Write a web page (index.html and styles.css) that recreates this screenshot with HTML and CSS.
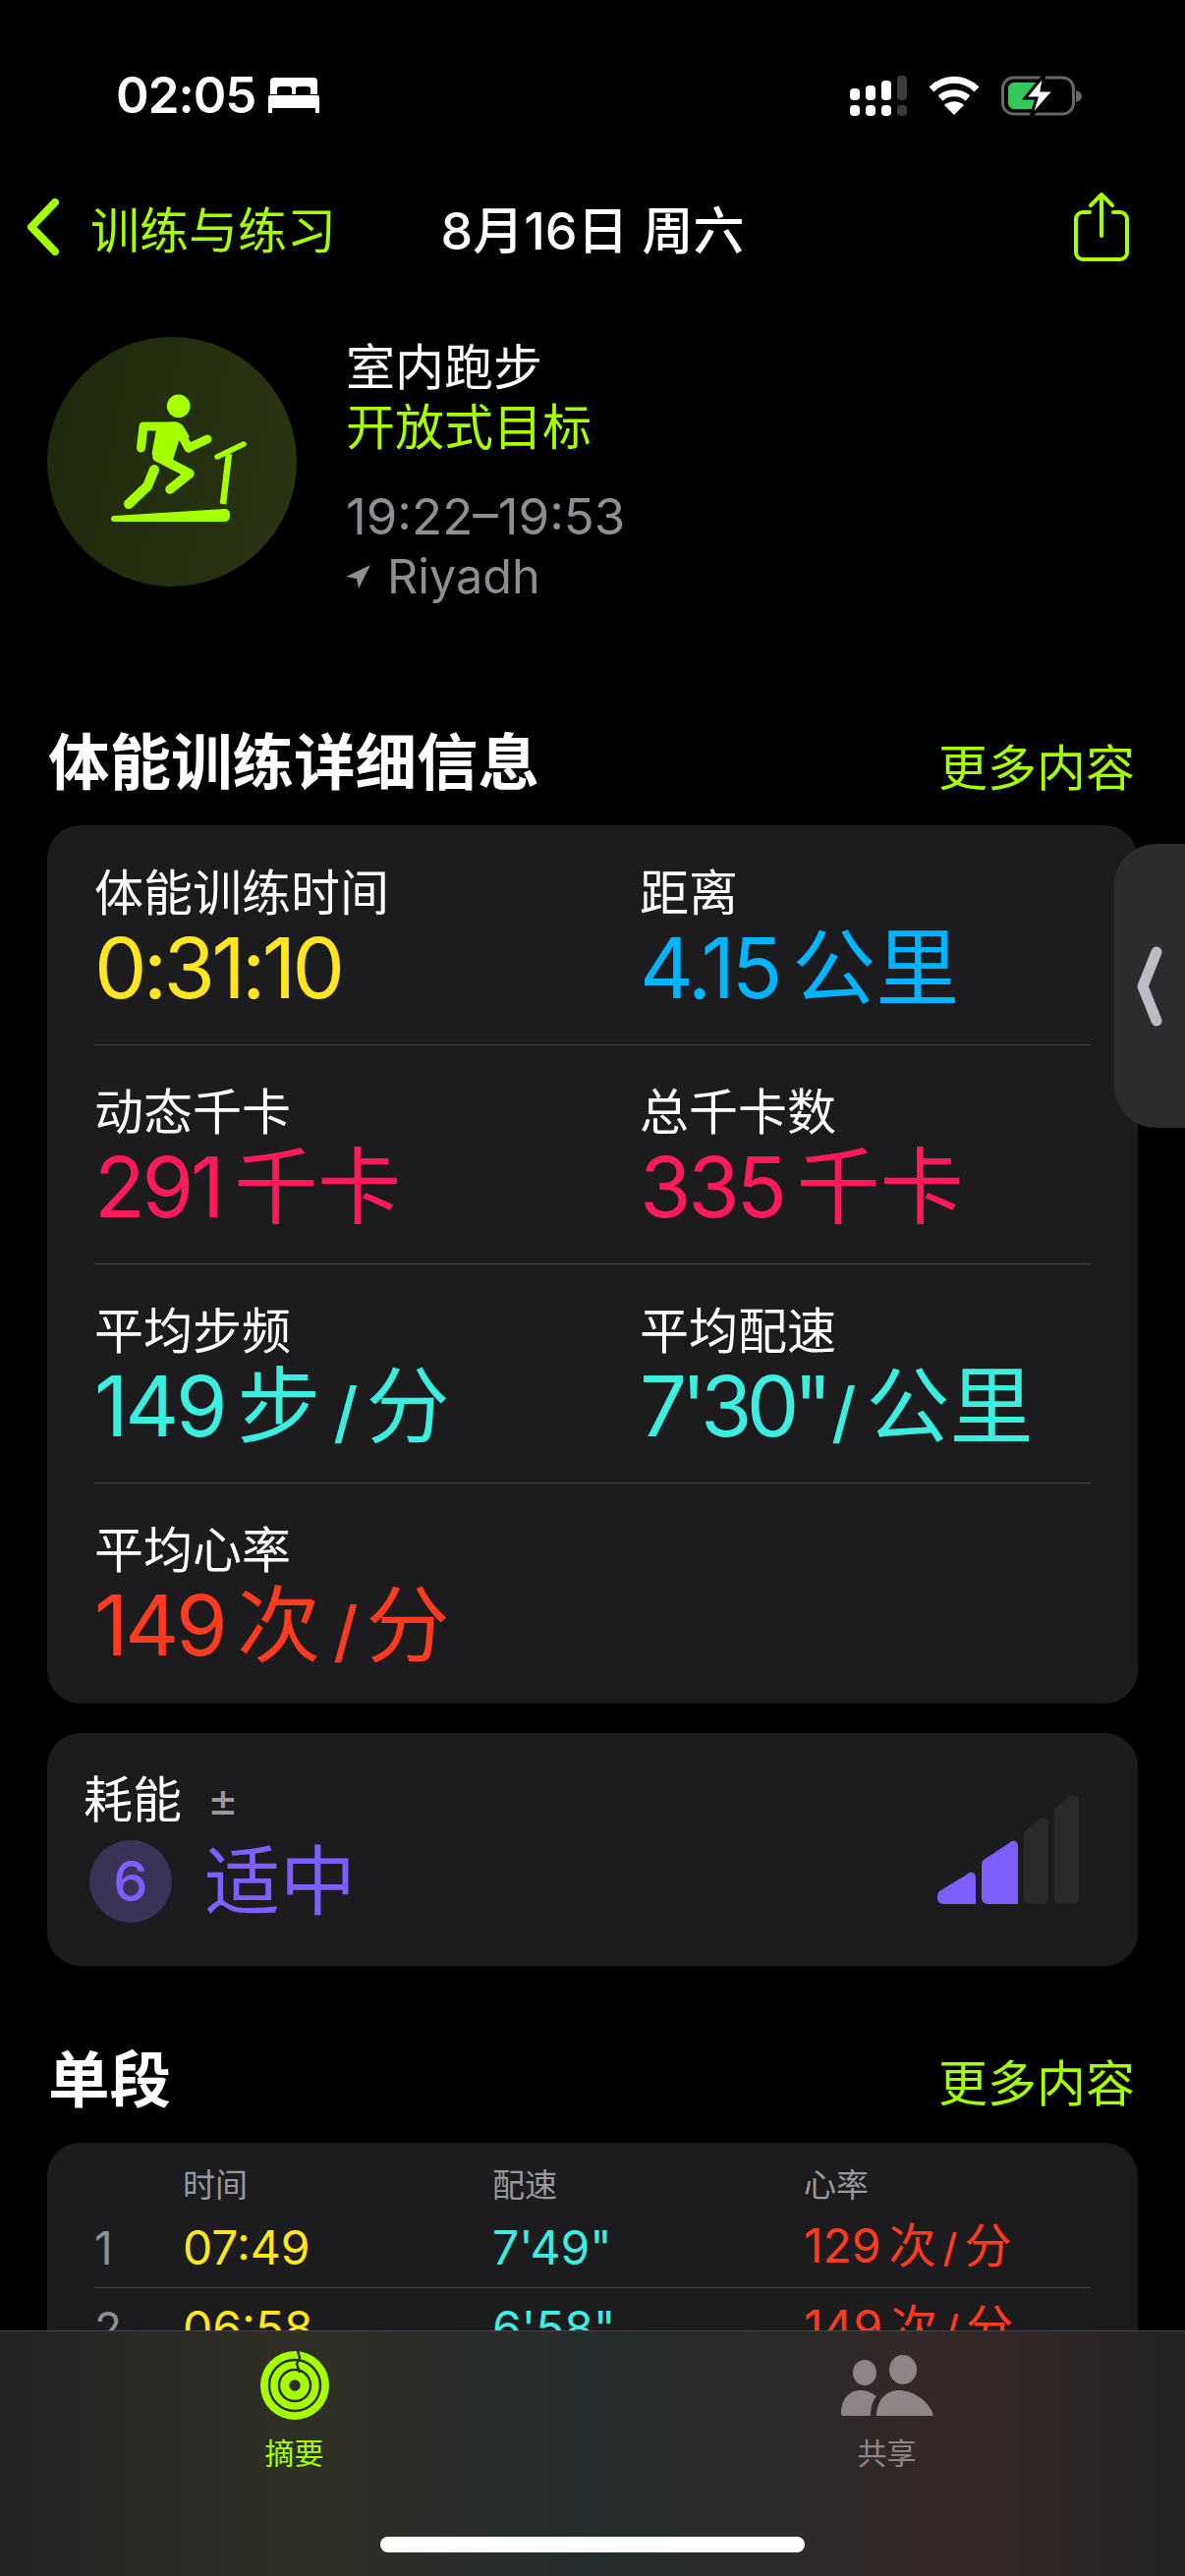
FILE: index.html
```html
<!DOCTYPE html>
<html lang="zh-CN">
<head>
<meta charset="utf-8">
<title>体能训练详细信息</title>
<link rel="stylesheet" href="styles.css">
</head>
<body>
<div class="screen">
  <div class="status">
    <div class="status-left">
      <span class="clock">02:05</span>
      <svg class="bed" width="52" height="38" viewBox="0 0 52 38"><path fill="#fff" d="M6 1h40a4 4 0 0 1 4 4v13h-7v-5a3 3 0 0 0-3-3h-9a3 3 0 0 0-3 3v5h-4v-5a3 3 0 0 0-3-3h-9a3 3 0 0 0-3 3v5H2V5a4 4 0 0 1 4-4zM0 21a2 2 0 0 1 2-2h48a2 2 0 0 1 2 2v16h-4v-5H4v5H0z"/></svg>
    </div>
    <div class="status-right">
      <svg width="58" height="41" viewBox="0 0 58 41"><g fill="#fff"><rect x="0" y="13" width="10" height="12" rx="4"/><rect x="16" y="10" width="10" height="15" rx="4"/><rect x="32" y="5" width="10" height="20" rx="4"/><rect x="0" y="30" width="10" height="11" rx="4"/><rect x="16" y="30" width="10" height="11" rx="4"/><rect x="32" y="30" width="10" height="11" rx="4"/></g><g fill="#3a3a3a"><rect x="48" y="0" width="10" height="25" rx="4"/><rect x="48" y="30" width="10" height="11" rx="4"/></g></svg>
      <svg class="wifi" width="52" height="40" viewBox="0 0 52 40"><g fill="none" stroke="#fff" stroke-width="7"><path d="M3 14C16 1 36 1 49 14"/><path d="M12 23c8-7 20-7 28 0"/></g><path fill="#fff" d="M16 30c6-5 14-5 20 0L26 40z"/></svg>
      <svg class="battery" width="84" height="44" viewBox="0 0 84 44"><rect x="1.5" y="4" width="72" height="37" rx="11" fill="none" stroke="#666" stroke-width="3"/><path d="M76 17c4 1 6 3 6 6s-2 5-6 6z" fill="#666"/><path fill="#34c759" d="M13 9h26l-6 12h6l-4 15H13a6 6 0 0 1-6-6V15a6 6 0 0 1 6-6z"/><path fill="#fff" stroke="#000" stroke-width="3" d="M44 1 24 25h12l-6 19 24-27H41z"/></svg>
    </div>
  </div>

  <div class="nav">
    <div class="nav-back">
      <svg width="34" height="58" viewBox="0 0 34 58"><path d="M29 4 5 29l24 25" fill="none" stroke="#a6ff00" stroke-width="8" stroke-linecap="round" stroke-linejoin="round"/></svg>
      <span>训练与练习</span>
    </div>
    <div class="nav-title">8月16日 周六</div>
    <svg class="nav-share" width="58" height="72" viewBox="0 0 58 72"><g fill="none" stroke="#a6ff00" stroke-width="4" stroke-linecap="round" stroke-linejoin="round"><path d="M17 21H10a7 7 0 0 0-7 7v34a7 7 0 0 0 7 7h38a7 7 0 0 0 7-7V28a7 7 0 0 0-7-7h-7"/><path d="M29 45V3M18 14 29 3l11 11"/></g></svg>
  </div>

  <div class="summary">
    <div class="avatar">
      <svg width="254" height="254" viewBox="48 343 254 254"><g fill="none" stroke="#a6ff00" stroke-linecap="round" stroke-linejoin="round"><path d="M143.500 456l2.500-22 26 0" stroke-width="9"/><path d="M181 436l11 20 19-9" stroke-width="9"/><path d="M160 465l33 17-20 16" stroke-width="9.500"/><path d="M157 478l-7 17-19 18" stroke-width="10"/><path d="M221 465l27-13" stroke-width="5.500"/></g><path fill="none" stroke="#a6ff00" stroke-width="6.500" d="M233 462l-6 51"/><path fill="#a6ff00" d="M160 432l16-3q8 0 12 7l5 9-11 4-6 19-20-4q-2-1-1-5z"/><circle cx="181.700" cy="413.300" r="11.800" fill="#a6ff00"/><path fill="#a6ff00" d="M116 525l112-7h1a5 5 0 0 1 5 5v3a5 5 0 0 1-5 5H116a3 3 0 0 1 0-6z"/></svg>
    </div>
    <div class="summary-text">
      <div class="s-title">室内跑步</div>
      <div class="s-goal">开放式目标</div>
      <div class="s-time">19:22–19:53</div>
      <div class="s-loc">
        <svg width="26" height="26" viewBox="0 0 26 26"><path fill="#8e8e93" d="M25 1 0 13l11 2 2 10z"/></svg>
        <span>Riyadh</span>
      </div>
    </div>
  </div>

  <div class="sec-head first">
    <h2>体能训练详细信息</h2>
    <span class="more">更多内容</span>
  </div>

  <div class="card metrics">
    <div class="m-row">
      <div class="metric"><div class="m-label">体能训练时间</div><div class="m-value yellow clockval">0:31:10</div></div>
      <div class="metric"><div class="m-label">距离</div><div class="m-value blue">4.15<span class="u">公里</span></div></div>
    </div>
    <div class="m-row">
      <div class="metric"><div class="m-label">动态千卡</div><div class="m-value pink">291<span class="u">千卡</span></div></div>
      <div class="metric"><div class="m-label">总千卡数</div><div class="m-value pink">335<span class="u">千卡</span></div></div>
    </div>
    <div class="m-row">
      <div class="metric"><div class="m-label">平均步频</div><div class="m-value cyan">149<span class="u">步</span><span class="sl">/</span><span class="u2">分</span></div></div>
      <div class="metric"><div class="m-label">平均配速</div><div class="m-value cyan"><span class="pace">7'30"</span><span class="sl tight">/</span><span class="u2">公里</span></div></div>
    </div>
    <div class="m-row last">
      <div class="metric"><div class="m-label">平均心率</div><div class="m-value red">149<span class="u">次</span><span class="sl">/</span><span class="u2">分</span></div></div>
    </div>
  </div>

  <div class="card effort">
    <div class="effort-main">
      <div class="effort-label"><span>耗能</span><span class="pm">±</span></div>
      <div class="effort-val"><span class="badge">6</span><span class="effort-text">适中</span></div>
    </div>
    <svg class="effort-bars" width="146" height="114" viewBox="0 0 146 114"><path fill="#7f5fff" d="M0 104q0-3 2-5L30 82c4-4 9-2 9 3v27H6a6 6 0 0 1-6-6z"/><path fill="#7f5fff" d="M45 72q0-3 2-5L73 50c4-4 9-2 9 3v59H51a6 6 0 0 1-6-6z"/><path fill="#2a2a2c" d="M88 42q0-3 2-5L103 26c4-3 10-2 10 3v77a6 6 0 0 1-6 6H94a6 6 0 0 1-6-6z"/><path fill="#2a2a2c" d="M119 19q0-3 2-5L134 3c4-3 10-2 10 3v100a6 6 0 0 1-6 6h-13a6 6 0 0 1-6-6z"/></svg>
  </div>

  <div class="sec-head second">
    <h2>单段</h2>
    <span class="more">更多内容</span>
  </div>

  <div class="card splits">
    <div class="sp-grid sp-head"><span></span><span>时间</span><span>配速</span><span>心率</span></div>
    <div class="sp-grid sp-row sep"><span class="n">1</span><span class="yellow">07:49</span><span class="cyan">7'49"</span><span class="red">129<span class="su">次</span><span class="ssl">/</span><span class="su2">分</span></span></div>
    <div class="sp-grid sp-row"><span class="n">2</span><span class="yellow">06:58</span><span class="cyan">6'58"</span><span class="red">149<span class="su">次</span><span class="ssl">/</span><span class="su2">分</span></span></div>
  </div>

  <div class="handle">
    <svg width="26" height="82" viewBox="0 0 26 82"><path d="M20 6 6 41l14 35" fill="none" stroke="#bcbcc4" stroke-width="11" stroke-linecap="round" stroke-linejoin="round"/></svg>
  </div>

  <div class="tabbar">
    <div class="tabs">
      <div class="tab active">
        <svg width="70" height="70" viewBox="0 0 70 70"><circle cx="35" cy="35" r="35" fill="#a6ff00"/><g fill="none" stroke="#2b2c22" stroke-width="2.500"><circle cx="35" cy="35" r="26"/><circle cx="35" cy="35" r="16"/><path d="M38 0l2 7-3 6 3 9"/></g><circle cx="35" cy="35" r="5.700" fill="#2b2c22"/></svg>
        <span>摘要</span>
      </div>
      <div class="tab">
        <svg width="94" height="62" viewBox="0 0 94 62"><g fill="#8e8686"><ellipse cx="24" cy="18" rx="12" ry="13"/><ellipse cx="63" cy="15" rx="14" ry="15"/><path d="M0 60c0-14 7-24 20-24 7 0 12 3 16 6-4 5-6 11-6 20H1z"/><path d="M36 62c0-16 10-26 23-26s31 10 35 26z"/></g></svg>
        <span>共享</span>
      </div>
    </div>
    <div class="home"></div>
  </div>
</div>
</body>
</html>
```
FILE: styles.css
```css
* { box-sizing: border-box; margin: 0; padding: 0; }
html, body { background: #000; }
body { font-family: Inter, "Noto Sans CJK SC", sans-serif; color: #fff; }
.screen { position: relative; width: 1206px; height: 2622px; overflow: hidden; background: #000; }

.status { display: flex; justify-content: space-between; align-items: center; height: 60px; margin-top: 67px; padding: 0 103px 0 118px; }
.status-left { display: flex; align-items: center; gap: 13px; }
.clock { font-size: 51px; font-weight: 600; letter-spacing: -1px; line-height: 60px; }
.status-right { display: flex; align-items: center; }
.wifi { margin-left: 22px; }
.battery { margin-left: 22px; }

.nav { position: relative; display: flex; justify-content: space-between; align-items: center; height: 80px; margin-top: 64px; padding: 0 56px 0 27px; }
.nav-back { display: flex; align-items: center; gap: 31px; font-size: 50px; color: #a6ff00; }
.nav-title { position: absolute; left: 0; right: 0; text-align: center; font-size: 52px; font-weight: 500; }

.summary { display: flex; gap: 50px; margin-top: 72px; padding-left: 48px; }
.avatar { width: 254px; height: 254px; border-radius: 50%; background: linear-gradient(100deg, #1e290c, #2a3512); }
.s-title, .s-goal, .s-time, .s-loc { font-size: 50px; line-height: 61px; }
.summary-text { margin-top: 1px; }
.s-goal { color: #a6ff00; }
.s-time { color: #8e8e93; margin-top: 29px; font-size: 51px; }
.s-loc { color: #8e8e93; display: flex; align-items: center; gap: 16px; font-size: 48.5px; }

.sec-head { display: flex; justify-content: space-between; align-items: center; padding: 0 51px 0 49px; height: 80px; }
.sec-head.first { margin-top: 119px; }
.sec-head.second { margin-top: 76px; }
.sec-head h2 { font-size: 62.5px; font-weight: 700; line-height: 80px; }
.more { color: #a6ff00; font-size: 50px; margin-top: 3px; }
.second .more { margin-top: 0; }

.card { background: #1c1c1e; margin: 0 48px; border-radius: 34px; }
.metrics { margin-top: 24px; padding: 39px 48px 0 48px; height: 894px; }
.m-row { display: grid; grid-template-columns: 555px 1fr; height: 185px; margin-bottom: 38px; border-bottom: 1px solid #444446; }
.m-row.last { border-bottom: 0; margin-bottom: 0; }
.m-label { font-size: 50px; line-height: 60px; }
.m-value { font-size: 85px; line-height: 90px; margin-top: 2px; letter-spacing: -3.3px; white-space: nowrap; }
.clockval { letter-spacing: -3.8px; }
.u, .u2 { letter-spacing: 0; }
.u { margin-left: 13px; }
.sl { font-size: 68px; font-weight: 500; letter-spacing: 0; margin: 0 8px 0 13px; }
.sl.tight { margin: 0 10px 0 5px; }
.pace { letter-spacing: -5.8px; }
.yellow { color: #ffe620; }
.blue { color: #00b4ff; }
.pink { color: #ff1a5b; }
.cyan { color: #3ceee0; }
.red { color: #ff3b1f; }

.effort { display: flex; justify-content: space-between; height: 237px; margin-top: 30px; padding: 39px 58px 0 37px; }
.effort-label { display: flex; align-items: center; gap: 26px; font-size: 50px; line-height: 58px; }
.pm { color: #98989d; font-size: 48px; }
.effort-val { display: flex; align-items: center; gap: 33px; margin-top: 9px; padding-left: 6px; }
.badge { display: flex; align-items: center; justify-content: center; width: 84px; height: 84px; border-radius: 50%; background: #3b3258; color: #7f5fff; font-size: 56px; font-weight: 500; }
.effort-text { color: #7f5fff; font-size: 77px; line-height: 90px; }
.effort-bars { margin-top: 23px; }

.splits { margin-top: 24px; height: 500px; padding: 0 48px; }
.sp-grid { display: grid; grid-template-columns: 90px 315px 317px 1fr; align-items: center; }
.sp-head { height: 78px; padding-top: 4px; font-size: 33px; color: #98989d; }
.sp-row { height: 70px; padding-top: 12px; font-size: 48px; line-height: 54px; white-space: nowrap; }
.sp-row.sep { height: 70px; padding-top: 0; border-bottom: 1px solid #444446; padding-bottom: 15px; }
.sp-row .n { color: #8e8e93; font-size: 46px; }
.su { margin-left: 8px; }
.ssl { font-size: 40px; font-weight: 500; margin: 0 7px; }

.handle { position: absolute; left: 1134px; top: 859px; width: 72px; height: 289px; display: flex; align-items: center; padding-left: 23px; background: #2c2c2e; border-radius: 42px 0 0 42px; }

.tabbar { position: absolute; left: 0; right: 0; bottom: 0; height: 250px; border-top: 1px solid #444446; background: linear-gradient(90deg, #222 0%, #302f27 25%, #262d2e 50%, #2c2a2a 65%, #352827 82%, #222 100%); }
.tabs { display: flex; padding-top: 20px; margin-left: -2px; }
.tab { width: 603px; display: flex; flex-direction: column; align-items: center; height: 130px; color: #8e8686; font-size: 30px; }
.tab span { margin-top: 14px; line-height: 40px; }
.tab svg { height: 70px; }
.tab.active { color: #a6ff00; }
.home { position: absolute; left: 387px; top: 209px; width: 432px; height: 16px; border-radius: 8px; background: #fff; }
```
